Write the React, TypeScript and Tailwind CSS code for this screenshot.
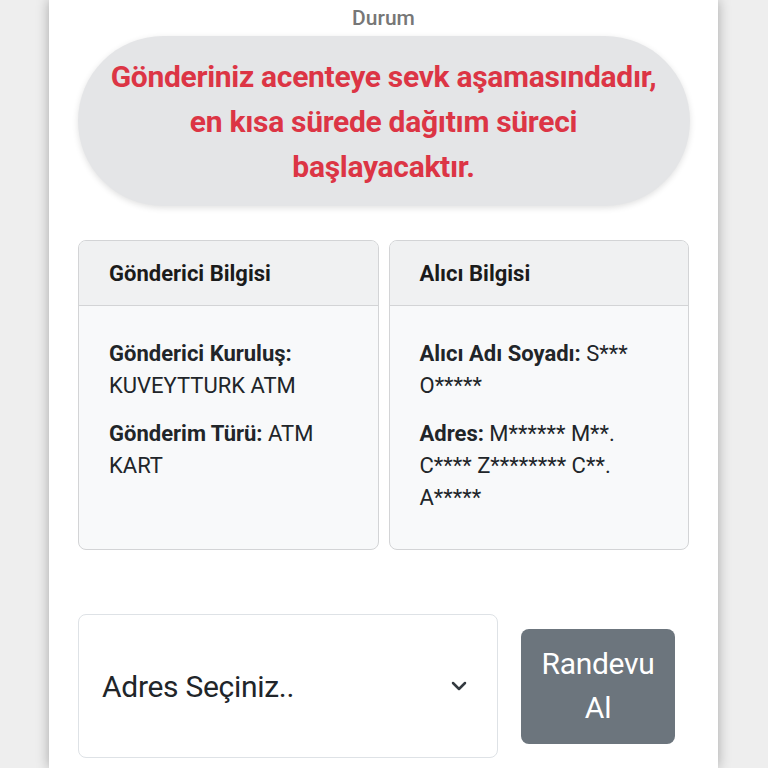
import { ChevronDown } from "lucide-react";

export default function App() {
  return (
    <div
      className="min-h-[768px] bg-[#eeeeee] flex justify-center overflow-hidden"
      style={{ fontFamily: "Roboto, 'Noto Sans', sans-serif" }}
    >
      <div className="w-[669px] ml-[-1px] bg-white shadow-[0_0_12px_rgba(0,0,0,0.3)] flex flex-col items-center px-[29px] h-[768px]">
        <div className="pt-[4px] text-[21px] leading-[28px] font-medium text-[#777777]">Durum</div>

        <div className="mt-[4px] w-[612px] h-[170px] rounded-full bg-[#e4e5e7] shadow-[0_2px_6px_rgba(0,0,0,0.12)] flex items-center justify-center px-6">
          <p className="text-center text-[#dc3545] font-bold text-[30px] leading-[45px] tracking-[-0.3px]">
            Gönderiniz acenteye sevk aşamasındadır,
            <br />
            en kısa sürede dağıtım süreci
            <br />
            başlayacaktır.
          </p>
        </div>

        <div className="mt-[34px] w-[611px] grid grid-cols-2 gap-[10px]">
          <div className="h-[310px] rounded-[8px] border border-[#d3d4d6] bg-[#f8f9fa] overflow-hidden flex flex-col">
            <div className="h-[65px] shrink-0 bg-[#f0f1f2] border-b border-[#d3d4d6] flex items-center px-[30px] text-[22px] font-bold text-[#1b1b1b]">
              Gönderici Bilgisi
            </div>
            <div className="px-[30px] pt-[32px] text-[22px] leading-[32px] text-[#212529]">
              <p>
                <b className="font-bold">Gönderici Kuruluş:</b> KUVEYTTURK ATM
              </p>
              <p className="mt-[16px]">
                <b className="font-bold">Gönderim Türü:</b> ATM KART
              </p>
            </div>
          </div>
          <div className="h-[310px] rounded-[8px] border border-[#d3d4d6] bg-[#f8f9fa] overflow-hidden flex flex-col">
            <div className="h-[65px] shrink-0 bg-[#f0f1f2] border-b border-[#d3d4d6] flex items-center px-[30px] text-[22px] font-bold text-[#1b1b1b]">
              Alıcı Bilgisi
            </div>
            <div className="px-[30px] pt-[32px] text-[22px] leading-[32px] text-[#212529]">
              <p>
                <b className="font-bold">Alıcı Adı Soyadı:</b> S*** O*****
              </p>
              <p className="mt-[16px]">
                <b className="font-bold">Adres:</b> M****** M**. C**** Z******** C**. A*****
              </p>
            </div>
          </div>
        </div>

        <div className="mt-[64px] w-[611px] flex items-center">
          <div className="w-[420px] h-[144px] rounded-[8px] border border-[#dee2e6] bg-white flex items-center justify-between pl-[23px] pr-[26px]">
            <span className="text-[30px] text-[#212529] tracking-[-0.3px]">Adres Seçiniz..</span>
            <ChevronDown className="w-[24px] h-[24px] text-[#343a40]" strokeWidth={2.5} />
          </div>
          <button className="ml-[23px] w-[154px] h-[115px] rounded-[8px] bg-[#6c757d] text-white text-[30px] leading-[44px] tracking-[-0.3px]">
            Randevu
            <br />
            Al
          </button>
        </div>
      </div>
    </div>
  );
}
